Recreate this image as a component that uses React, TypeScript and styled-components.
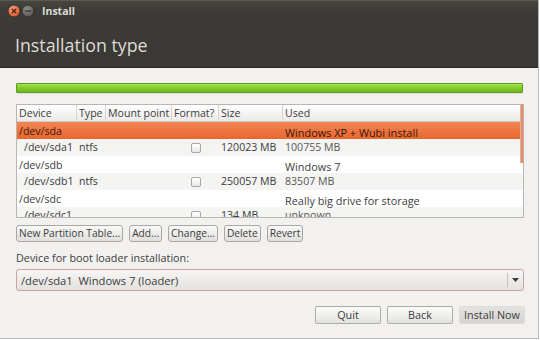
import styled, { createGlobalStyle } from "styled-components";

const GlobalStyle = createGlobalStyle`
  html, body {
    margin: 0;
    padding: 0;
    background: #ffffff;
  }
  * {
    box-sizing: border-box;
  }
`;

interface IRow {
  device: string;
  type?: string;
  format?: boolean;
  size?: string;
  used?: string;
  disk?: boolean;
  selected?: boolean;
}

const rows: IRow[] = [
  { device: "/dev/sda", used: "Windows XP + Wubi install", disk: true, selected: true },
  { device: "/dev/sda1", type: "ntfs", format: true, size: "120023 MB", used: "100755 MB" },
  { device: "/dev/sdb", used: "Windows 7", disk: true },
  { device: "/dev/sdb1", type: "ntfs", format: true, size: "250057 MB", used: "83507 MB" },
  { device: "/dev/sdc", used: "Really big drive for storage", disk: true },
  { device: "/dev/sdc1", format: true, size: "134 MB", used: "unknown" },
];

const columns = ["Device", "Type", "Mount point", "Format?", "Size", "Used"];

export default function App() {
  return (
    <>
      <GlobalStyle />
      <Window>
        <TitleBar>
          <TopRow>
            <Controls>
              <svg width="28" height="14" viewBox="0 0 28 14">
                <defs>
                  <radialGradient id="cl" cx="40%" cy="35%" r="70%">
                    <stop offset="0%" stopColor="#f7a27a" />
                    <stop offset="100%" stopColor="#d9512a" />
                  </radialGradient>
                  <radialGradient id="mn" cx="40%" cy="35%" r="70%">
                    <stop offset="0%" stopColor="#8f8d88" />
                    <stop offset="100%" stopColor="#55534e" />
                  </radialGradient>
                </defs>
                <circle cx="7" cy="7" r="6" fill="url(#cl)" stroke="#2a2926" strokeWidth="0.8" />
                <path d="M4.8 4.8 L9.2 9.2 M9.2 4.8 L4.8 9.2" stroke="#4a2010" strokeWidth="1.3" />
                <circle cx="21" cy="7" r="6" fill="url(#mn)" stroke="#2a2926" strokeWidth="0.8" />
                <path d="M18 7 L24 7" stroke="#3a3936" strokeWidth="1.4" />
              </svg>
            </Controls>
            <WindowTitle>Install</WindowTitle>
          </TopRow>
          <Heading>Installation type</Heading>
        </TitleBar>

        <Content>
          <Progress />

          <TableBox>
            <HeaderRow>
              {columns.map((c) => (
                <HeaderCell key={c}>{c}</HeaderCell>
              ))}
            </HeaderRow>
            {rows.map((r, i) => (
              <Row key={r.device} $selected={r.selected} $alt={i % 2 === 1}>
                <Cell $indent={!r.disk}>{r.device}</Cell>
                <Cell>{r.type}</Cell>
                <Cell />
                <Cell $center>{r.format && <Check />}</Cell>
                <Cell>{r.size}</Cell>
                <UsedCell $disk={r.disk}>{r.used}</UsedCell>
              </Row>
            ))}
            <Scroll />
          </TableBox>

          <ButtonRow>
            <SmallButton>New Partition Table...</SmallButton>
            <SmallButton>Add...</SmallButton>
            <SmallButton>Change...</SmallButton>
            <SmallButton>Delete</SmallButton>
            <SmallButton>Revert</SmallButton>
          </ButtonRow>

          <Label>Device for boot loader installation:</Label>
          <Combo>
            <ComboText>/dev/sda1&nbsp; Windows 7 (loader)</ComboText>
            <ComboArrow>
              <svg width="7" height="4" viewBox="0 0 7 4">
                <path d="M0 0 L7 0 L3.5 4 Z" fill="#3c3c3c" />
              </svg>
            </ComboArrow>
          </Combo>

          <Footer>
            <DialogButton>Quit</DialogButton>
            <DialogButton>Back</DialogButton>
            <DialogButton $primary>Install Now</DialogButton>
          </Footer>
        </Content>
      </Window>
    </>
  );
}

const Window = styled.div`
  width: 539px;
  height: 339px;
  display: flex;
  flex-direction: column;
  background: #f2f1f0;
  border-right: 1px solid #b9b7b3;
  border-bottom: 1px solid #b9b7b3;
  font-family: "Open Sans", "Noto Sans", sans-serif;
  color: #3c3c3c;
  overflow: hidden;
`;

const TitleBar = styled.div`
  height: 68px;
  flex-shrink: 0;
  background: linear-gradient(#46453f 0px, #3c3b37 10px, #3a3935 100%);
  border-top: 1px solid #5a5852;
  border-bottom: 1px solid #2a2926;
  display: flex;
  flex-direction: column;
`;

const TopRow = styled.div`
  display: flex;
  align-items: center;
  height: 20px;
  padding-left: 7px;
  gap: 7px;
`;

const Controls = styled.div`
  display: flex;
  align-items: center;
`;

const WindowTitle = styled.span`
  font-family: "Open Sans", "Noto Sans", sans-serif;
  font-weight: 700;
  font-size: 10.5px;
  color: #dfdbd2;
`;

const Heading = styled.div`
  margin-top: 12px;
  padding-left: 15px;
  font-family: "Open Sans", "Noto Sans", sans-serif;
  font-size: 17.8px;
  color: #dfdbd2;
`;

const Content = styled.div`
  display: flex;
  flex-direction: column;
  padding: 0 15px 0 16px;
`;

const Progress = styled.div`
  margin-top: 15px;
  height: 10px;
  border: 1px solid #5e9a1e;
  border-radius: 1px;
  background: linear-gradient(#a6e052 0%, #86cd2e 45%, #6fb81c 100%);
  box-shadow: 0 1px 1px rgba(0, 0, 0, 0.08);
`;

const cols = "60px 29px 66px 47px 64px 1fr";

const TableBox = styled.div`
  position: relative;
  margin-top: 11px;
  height: 114px;
  width: 508px;
  border: 1px solid #b8b6b3;
  background: #ffffff;
  overflow: hidden;
  font-size: 10.6px;
`;

const HeaderRow = styled.div`
  display: grid;
  grid-template-columns: ${cols};
  height: 17px;
  background: linear-gradient(#ffffff, #ebeae8);
  border-bottom: 1px solid #cfcdca;
`;

const HeaderCell = styled.div`
  padding-left: 2px;
  line-height: 16px;
  border-right: 1px solid #d6d4d1;
  white-space: nowrap;
  overflow: hidden;
`;

const Row = styled.div<{ $selected?: boolean; $alt?: boolean }>`
  display: grid;
  grid-template-columns: ${cols};
  height: 17px;
  line-height: 17px;
  background: ${(p) =>
    p.$selected
      ? "linear-gradient(#f28553, #e8662f)"
      : p.$alt
      ? "#f4f4f3"
      : "#ffffff"};
  color: ${(p) => (p.$selected ? "#3a1606" : "#3c3c3c")};
`;

const Cell = styled.div<{ $indent?: boolean; $center?: boolean }>`
  padding-left: ${(p) => (p.$center ? "0" : p.$indent ? "7px" : "2px")};
  white-space: nowrap;
  overflow: hidden;
  display: flex;
  align-items: center;
  justify-content: ${(p) => (p.$center ? "center" : "flex-start")};
`;

const UsedCell = styled.div<{ $disk?: boolean }>`
  padding-left: 2px;
  white-space: nowrap;
  padding-top: ${(p) => (p.$disk ? "3px" : "0")};
  line-height: ${(p) => (p.$disk ? "15px" : "17px")};
  color: ${(p) => (p.$disk ? "inherit" : "#5a5855")};
  font-size: ${(p) => (p.$disk ? "10.9px" : "10.6px")};
`;

const Check = styled.span`
  display: inline-block;
  width: 10px;
  height: 10px;
  border: 1px solid #a9a7a4;
  border-radius: 2px;
  background: linear-gradient(#ffffff, #e9e8e6);
`;

const Scroll = styled.div`
  position: absolute;
  right: 0;
  top: 0;
  width: 3px;
  height: 58px;
  background: #ec8a5f;
  border-left: 1px solid #d9b3a2;
`;

const ButtonRow = styled.div`
  display: flex;
  gap: 6px;
  margin-top: 7px;
`;

const SmallButton = styled.div`
  height: 17px;
  padding: 0 2px;
  font-size: 10.2px;
  line-height: 15px;
  border: 1px solid #aaa8a4;
  border-radius: 3px;
  background: linear-gradient(#f9f9f8, #e0dfdc);
  white-space: nowrap;
`;

const Label = styled.div`
  margin-top: 9px;
  font-size: 10.8px;
  line-height: 14px;
`;

const Combo = styled.div`
  margin-top: 4px;
  height: 22px;
  width: 508px;
  display: flex;
  align-items: center;
  border: 1px solid #c6a69c;
  border-radius: 3px;
  background: linear-gradient(#f7f6f5, #e2e1de);
`;

const ComboText = styled.div`
  flex: 1;
  padding-left: 4px;
  font-size: 11.2px;
`;

const ComboArrow = styled.div`
  width: 15px;
  height: 14px;
  margin-right: 1px;
  display: flex;
  align-items: center;
  justify-content: center;
  border-left: 1px solid #c4c2bf;
`;

const Footer = styled.div`
  display: flex;
  justify-content: flex-end;
  gap: 6px;
  margin-top: 15px;
  width: 509px;
`;

const DialogButton = styled.div<{ $primary?: boolean }>`
  width: 66px;
  height: 18px;
  font-size: 10.8px;
  line-height: 16px;
  text-align: center;
  border-radius: 2px;
  white-space: nowrap;
  border: 1px solid ${(p) => (p.$primary ? "#dddcda" : "#adaba7")};
  background: ${(p) =>
    p.$primary
      ? "linear-gradient(#e3e2e0, #d6d5d2)"
      : "linear-gradient(#fbfbfa, #e3e2df)"};
`;
